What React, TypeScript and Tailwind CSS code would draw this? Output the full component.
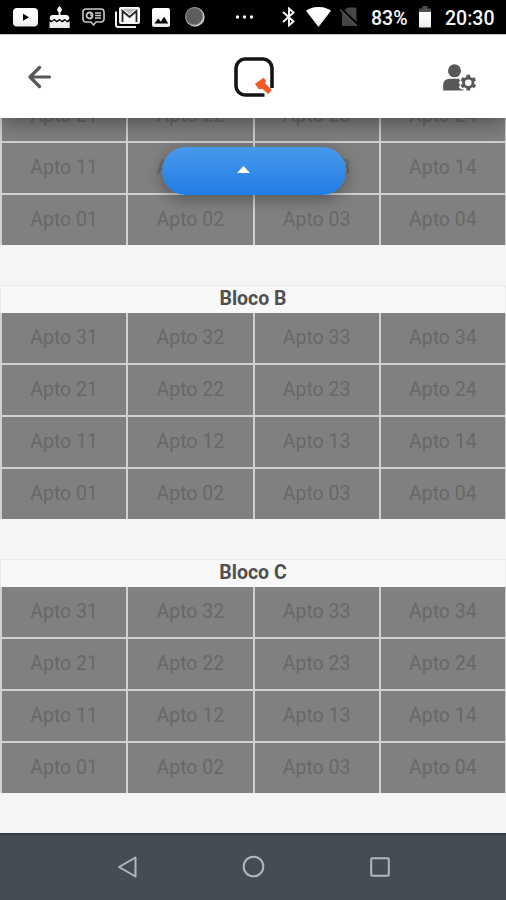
const fullBlock = [
  ["31", "32", "33", "34"],
  ["21", "22", "23", "24"],
  ["11", "12", "13", "14"],
  ["01", "02", "03", "04"],
];

function StatusBar() {
  return (
    <div className="flex h-[34px] shrink-0 items-center bg-black text-[19px] font-medium text-white">
      <svg className="ml-[13px] h-[19px] w-[25px]" viewBox="0 0 25 19">
        <rect width="25" height="18.5" rx="4" fill="#fff" />
        <path d="M10 5.7v7l6-3.5z" fill="#000" />
      </svg>
      <svg className="ml-[11px] mb-px h-[22px] w-[21px]" viewBox="0 0 21 22" fill="#fff">
        <path d="M10.5 0c1.8 2 2.4 2.7 2.4 3.8a2.4 2.4 0 0 1-4.8 0C8.1 2.8 9 2 10.5 0z" />
        <path d="M9.6 5h1.8v4h5.9c1.7 0 2.9 1.2 2.9 2.8v1.5l-2 1.5-2.6-2-2.6 2-2.5-2-2.6 2-2.5-2-2.6 2-2-1.5v-1.5C.8 10.2 2 9 3.7 9h5.9z" />
        <path d="M.5 15.5l1.7 1 2.9-2 2.7 2 2.7-2 2.7 2 2.7-2 2.7 2 2.1-1.2V22H.5z" />
      </svg>
      <svg className="ml-3 h-[19px] w-[23px]" viewBox="0 0 23 19" fill="none" stroke="#ccc">
        <path d="M4 1h15q3 0 3 3v7q0 3-3 3h-5l-2.5 3L9 14H4q-3 0-3-3V4q0-3 3-3z" strokeWidth="1.6" />
        <circle cx="7.5" cy="7.5" r="3" strokeWidth="1.8" />
        <path d="M8 6.5l3 2.5M13 5h6M13 7.5h6M13 10h6" strokeWidth="1.3" />
      </svg>
      <svg className="ml-[10px] h-[21px] w-[25px]" viewBox="0 0 25 21">
        <path d="M1 4.5v13.5q0 2 2 2h18" fill="none" stroke="#fff" strokeWidth="2" />
        <rect x="4" y="0" width="21" height="17" rx="2" fill="#fff" />
        <path d="M7.5 15V4l7 6 7-6v11" fill="none" stroke="#222" strokeWidth="1.8" />
        <path d="M7.5 1.8h14l-7 5.5z" fill="#bbb" />
      </svg>
      <svg className="ml-3 h-[19px] w-[18px]" viewBox="0 0 18 19">
        <rect width="18" height="19" rx="2" fill="#fff" />
        <path d="M2.5 15.5l3.6-5 2.6 3.2 3.5-4.9 4 6.7z" fill="#000" />
      </svg>
      <svg className="ml-[15px] h-5 w-5" viewBox="0 0 20 20">
        <circle cx="10" cy="10" r="9.7" fill="#d5d5d5" />
        <circle cx="9.2" cy="9.2" r="8.6" fill="#606060" stroke="#8a8a8a" strokeWidth="1" />
      </svg>
      <svg className="ml-[30px] h-1 w-[19px]" viewBox="0 0 19 4" fill="#fff">
        <circle cx="2.5" cy="2" r="1.7" />
        <circle cx="9.5" cy="2" r="1.7" />
        <circle cx="16.5" cy="2" r="1.7" />
      </svg>
      <svg className="ml-7 h-5 w-[14px]" viewBox="0 0 14 20" fill="none" stroke="#fff" strokeWidth="1.9">
        <path d="M1 5l10.5 9.5L7 18.5v-17l4.500 4L1 15" />
      </svg>
      <svg className="ml-[10px] mb-px h-5 w-[25px]" viewBox="0 0 25 20">
        <path d="M0 3.8C7-1.3 18-1.3 25 3.8L12.5 20z" fill="#fff" />
      </svg>
      <svg className="ml-[9px] h-5 w-[18px]" viewBox="0 0 18 20">
        <path d="M7.5.5H15q1.5 0 1.5 1.5v17H2V6z" fill="#484848" />
        <path d="M1 1.5l17 16.5" stroke="#000" strokeWidth="2.5" />
        <path d="M0 2.5l17 16.5" stroke="#555" strokeWidth="1.6" />
      </svg>
      <span className="ml-[13px] mt-[3px] w-[37px] whitespace-nowrap text-[19.5px]">83%</span>
      <svg className="ml-[10px] h-[22px] w-[14px]" viewBox="0 0 14 22">
        <path d="M4.5 0h5v2.5H13V6H1V2.5h3.5z" fill="#505050" />
        <path d="M1 6h12v15.5H1z" fill="#fff" />
      </svg>
      <span className="ml-[13px] mt-[3px] whitespace-nowrap text-[19.5px]">20:30</span>
    </div>
  );
}

function UserCogIcon() {
  return (
    <svg className="mt-px h-[27px] w-[33px]" viewBox="0 0 33 27" fill="#585858">
      <circle cx="11.5" cy="6.8" r="6.5" />
      <path d="M.2 26.500V21.500Q.2 14.800 7 14.800H16l1 1.700-1.200 2.200 1.300 2.300-1.300 2.300 2.200 2 2.500.2v1z" />
      <circle cx="25.3" cy="18.7" r="4.7" fill="none" stroke="#585858" strokeWidth="2.8" />
      <g stroke="#585858" strokeWidth="3.8">
        <path d="M25.3 10.8v3.4M25.3 23.2v3.4" />
        <path d="M18.46 14.75l2.94 1.7M29.2 20.95l2.94 1.7" />
        <path d="M18.46 22.65l2.94-1.7M29.2 16.45l2.94-1.7" />
      </g>
    </svg>
  );
}

function Header() {
  return (
    <header className="relative z-10 flex h-[84px] shrink-0 items-center justify-between border-t border-[#c4c4c4] bg-white pl-7 pr-[30px] shadow-[0_3px_22px_rgba(0,0,0,0.45)]">
      <svg
        className="mt-px h-6 w-6"
        viewBox="0 0 24 24"
        fill="none"
        stroke="#585858"
        strokeWidth="3.2"
        strokeLinecap="round"
        strokeLinejoin="round"
      >
        <path d="M11.5 2.5L2 12l9.5 9.5M2.5 12h19" />
      </svg>
      <svg className="ml-[13px] h-10 w-10" viewBox="0 0 40 40">
        <path
          d="M30.5 38H11Q7.500 38 4.700 35.300 2 32.500 2 29V11Q2 7.500 4.700 4.700 7.500 2 11 2H29Q32.500 2 35.300 4.700 38 7.500 38 11V31"
          fill="none"
          stroke="#151515"
          strokeWidth="3.6"
        />
        <path
          d="M21.5 27l8-5.8 2 2.2-.7 3.1 6.500 6.300-3 3.800-6.300-5.500-3 .8z"
          fill="#f15a29"
          stroke="#f15a29"
          strokeLinejoin="round"
        />
      </svg>
      <UserCogIcon />
    </header>
  );
}

function Apartments({ rows }: { rows: string[][] }) {
  return (
    <div className="grid grid-cols-4 gap-[2px] bg-[#d0d0d0] pl-[2px] pr-px">
      {rows.flat().map((apto) => (
        <div
          key={apto}
          className="flex h-[50px] items-center justify-center bg-[#808080] text-[19.5px] text-[#686868]"
        >
          Apto {apto}
        </div>
      ))}
    </div>
  );
}

function Block({ name }: { name: string }) {
  return (
    <section className="mt-10">
      <h2 className="flex h-7 items-center justify-center border border-b-0 border-[#ebebeb] bg-[#f8f8f8] pb-[2px] text-[19.5px] font-bold text-[#505050]">
        {name}
      </h2>
      <Apartments rows={fullBlock} />
    </section>
  );
}

function NavBar() {
  return (
    <nav className="flex h-[67px] shrink-0 items-center border-t-2 border-[#343b3f] bg-[#464d52] pb-[2px] pl-[117px]">
      <svg className="h-[22px] w-5" viewBox="0 0 20 22" fill="none" stroke="#b2b7ba" strokeWidth="2">
        <path d="M18.5 1.5v19L2 11z" strokeLinejoin="round" />
      </svg>
      <svg className="ml-[105px] h-[23px] w-[23px]" viewBox="0 0 23 23" fill="none" stroke="#b2b7ba" strokeWidth="2">
        <circle cx="11.5" cy="11.5" r="9.8" />
      </svg>
      <svg className="ml-[105px] h-5 w-5" viewBox="0 0 20 20" fill="none" stroke="#b2b7ba" strokeWidth="2">
        <rect x="1.2" y="1.2" width="17.6" height="17.6" rx="1" />
      </svg>
    </nav>
  );
}

export default function App() {
  return (
    <div className="flex h-[900px] w-[506px] flex-col overflow-hidden bg-[#f5f5f5] font-['Roboto',sans-serif]">
      <StatusBar />
      <Header />
      <main className="relative min-h-0 flex-1 overflow-hidden">
        {/* first block is scrolled partly under the header */}
        <div className="-mt-[27px]">
          <Apartments rows={fullBlock.slice(1)} />
        </div>
        <Block name="Bloco B" />
        <Block name="Bloco C" />
        <button
          aria-label="Expandir"
          className="absolute left-[162px] top-[29px] flex h-[48px] w-[184px] rounded-full bg-linear-to-b from-[#4799eb] to-[#207ce5] shadow-[0_4px_16px_rgba(0,0,0,0.35)]"
        >
          <svg className="ml-[75px] mt-[19px] h-[7px] w-[13px]" viewBox="0 0 13 7">
            <path d="M6.5 0L13 7H0z" fill="#fff" />
          </svg>
        </button>
      </main>
      <NavBar />
    </div>
  );
}
